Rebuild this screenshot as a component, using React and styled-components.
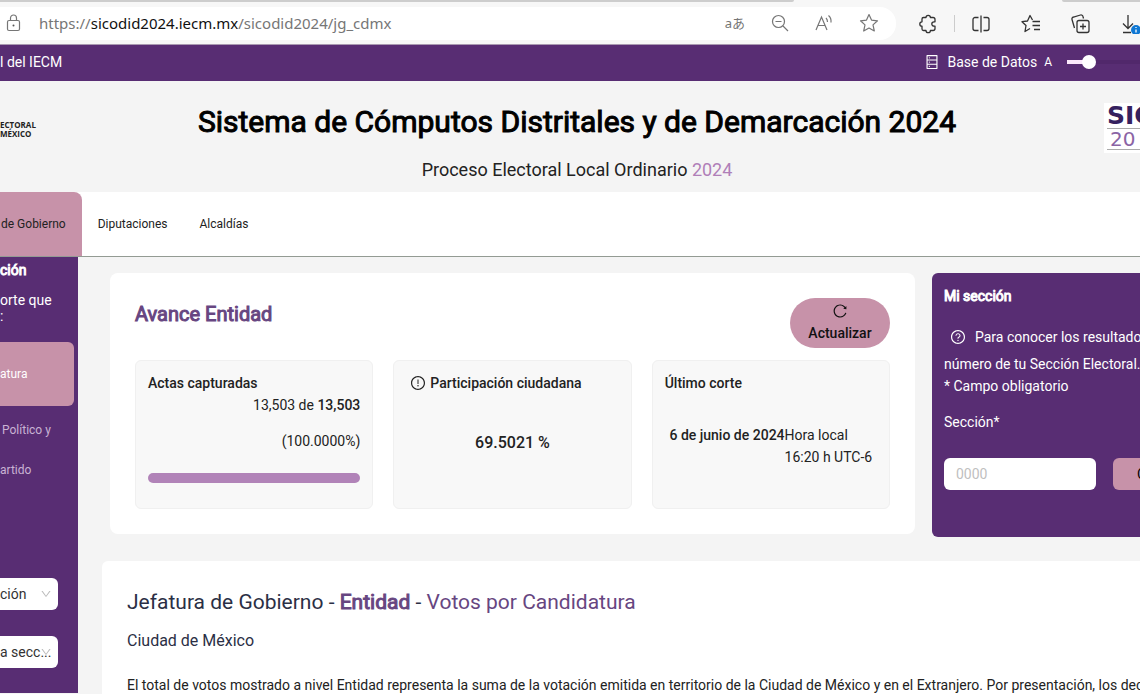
import React, { useState } from "react";
import styled, { createGlobalStyle, css } from "styled-components";
import {
	AiOutlineDatabase,
	AiOutlineDown,
	AiOutlineExclamationCircle,
	AiOutlineQuestionCircle,
	AiOutlineReload,
} from "react-icons/ai";

const purple = "#582d73";
const pink = "#c792a9";

function BrowserBar() {
	return (
		<Browser>
			<TabStrip>
				<StripPart $grow />
				<StripGap />
				<StripPart $right />
			</TabStrip>
			<BrowserRow>
				<AddressBar>
					<svg width="16" height="18" viewBox="0 0 16 18" fill="none" stroke="#767676" strokeWidth="1.2">
						<rect x="1.5" y="6.5" width="12" height="10" rx="1.5" />
						<path d="M4.5 6.5V4a3 3 0 0 1 6 0v2.5" />
						<circle cx="7.5" cy="11.5" r="1" fill="#555" stroke="none" />
					</svg>
					<Url>
						https://<b>sicodid2024.iecm.mx</b>/sicodid2024/jg_cdmx
					</Url>
					<AddressIcons>
						<Translate>aあ</Translate>
						<svg width="18" height="18" viewBox="0 0 18 18" fill="none" stroke="#767676" strokeWidth="1.2">
							<circle cx="7.5" cy="7.5" r="6" />
							<path d="M12 12l5 5M4.5 7.5h6" />
						</svg>
						<svg width="18" height="18" viewBox="0 0 18 18" fill="none" stroke="#767676" strokeWidth="1.2">
							<path d="M1 16L6.5 3 12 16M3 11.500h7M11 4q1.500 1.500 1.500 4M13.500 1.500q3 2.500 2.500 7" />
						</svg>
						<svg width="20" height="20" viewBox="0 0 20 20" fill="none" stroke="#767676" strokeWidth="1.2" strokeLinejoin="round">
							<path d="M10 1.500l2.500 5.600 6 .7-4.500 4.100 1.300 6.100L10 15l-5.300 3 1.300-6.100L1.500 7.800l6-.7z" />
						</svg>
					</AddressIcons>
				</AddressBar>
				<Tools>
					<svg width="20" height="20" viewBox="0 0 20 20" fill="none" stroke="#333" strokeWidth="1.3" strokeLinejoin="round">
						<path d="M5.500 3.500h2.500a2.200 2.200 0 0 1 4.400 0h2.600a2 2 0 0 1 2 2v2.300h-1a2.200 2.200 0 0 0 0 4.400h1v2.300a2 2 0 0 1-2 2h-2.600a2.200 2.200 0 0 1-4.400 0h-2.500a1.500 1.500 0 0 1-1.500-1.500v-2.800a2.200 2.200 0 0 1 0-4.400v-2.800a1.500 1.500 0 0 1 1.500-1.500z" />
					</svg>
					<Separator />
					<svg width="20" height="20" viewBox="0 0 20 20" fill="none" stroke="#333" strokeWidth="1.3">
						<path d="M7.500 3.500H4a2 2 0 0 0-2 2v9a2 2 0 0 0 2 2h3.500M12.500 3.500H16a2 2 0 0 1 2 2v9a2 2 0 0 1-2 2h-3.500M10 1.500v17" />
					</svg>
					<svg width="20" height="20" viewBox="0 0 20 20" fill="none" stroke="#333" strokeWidth="1.3" strokeLinejoin="round">
						<path d="M11.500 6L9 1.500 6.500 7l-5.500.7 4 3.800L4 17.500l5-3M11.500 7.500H19M11.500 11.500H19M13 15.500h6" />
					</svg>
					<svg width="20" height="20" viewBox="0 0 20 20" fill="none" stroke="#333" strokeWidth="1.3">
						<rect x="6" y="6.500" width="12" height="12" rx="2" />
						<path d="M3.500 14L1 5.500a2 2 0 0 1 1.500-2.500l7-2a2 2 0 0 1 2.500 1.500l.5 2M12 9.500v6M9 12.500h6" />
					</svg>
					<svg width="20" height="20" viewBox="0 0 20 20" fill="none" stroke="#333" strokeWidth="1.3">
						<path d="M7 1v13M2 9.500l5 5 5-5M2 18.500h8" />
						<circle cx="15" cy="16" r="5" fill="#0f78d4" stroke="none" />
						<path d="M15 15.500v3M15 13v1" stroke="#fff" />
					</svg>
				</Tools>
			</BrowserRow>
		</Browser>
	);
}

function Sidebar() {
	return (
		<Side>
			<SideTitle>ción</SideTitle>
			<SideText>
				orte que
				<br />:
			</SideText>
			<SideActive href="#candidatura">atura</SideActive>
			<SideLink href="#politico">Político y</SideLink>
			<SideLink href="#partido">artido</SideLink>
			<SideSelects>
				<SelectBox>
					<select aria-label="Demarcación">
						<option>ción</option>
					</select>
					<AiOutlineDown />
				</SelectBox>
				<SelectBox>
					<select aria-label="Sección">
						<option>a secc...</option>
					</select>
					<AiOutlineDown />
				</SelectBox>
			</SideSelects>
		</Side>
	);
}

function App() {
	const [size, setSize] = useState(25);
	const [seccion, setSeccion] = useState("");

	return (
		<Page>
			<GlobalStyle />
			<BrowserBar />
			<NavBar>
				<a href="#iecm">l del IECM</a>
				<NavRight>
					<a href="#datos">
						<AiOutlineDatabase size={16} /> Base de Datos
					</a>
					<label htmlFor="size">A</label>
					<Range
						id="size"
						type="range"
						value={size}
						onChange={(e) => setSize(e.target.value)}
					/>
				</NavRight>
			</NavBar>
			<Header>
				<IecmLogo>
					ECTORAL
					<br />
					MÉXICO
				</IecmLogo>
				<HeaderText>
					<h1>Sistema de Cómputos Distritales y de Demarcación 2024</h1>
					<p>
						Proceso Electoral Local Ordinario <span>2024</span>
					</p>
				</HeaderText>
				<SicodidLogo>
					<strong>SIC</strong>
					<span>20</span>
				</SicodidLogo>
			</Header>
			<Tabs>
				<Tab href="#jefatura" $active>
					de Gobierno
				</Tab>
				<Tab href="#diputaciones">Diputaciones</Tab>
				<Tab href="#alcaldias">Alcaldías</Tab>
			</Tabs>
			<Body>
				<Sidebar />
				<Main>
					<TopRow>
						<Progress>
							<ProgressHead>
								<h2>Avance Entidad</h2>
								<UpdateButton>
									<AiOutlineReload size={16} />
									Actualizar
								</UpdateButton>
							</ProgressHead>
							<Cards>
								<Card>
									<h3>Actas capturadas</h3>
									<Count>
										13,503 de <b>13,503</b>
									</Count>
									<Percent>(100.0000%)</Percent>
									<Bar>
										<div style={{ width: "100%" }} />
									</Bar>
								</Card>
								<Card>
									<h3>
										<AiOutlineExclamationCircle size={16} /> Participación ciudadana
									</h3>
									<Turnout>69.5021 %</Turnout>
								</Card>
								<Card>
									<h3>Último corte</h3>
									<Cutoff>
										<b>6 de junio de 2024</b>
										<span>
											Hora local
											<br />
											16:20 h UTC-6
										</span>
									</Cutoff>
								</Card>
							</Cards>
						</Progress>
						<Section>
							<h2>Mi sección</h2>
							<SectionHint>
								<AiOutlineQuestionCircle size={16} />
								Para conocer los resultados
							</SectionHint>
							<p>número de tu Sección Electoral.</p>
							<p>* Campo obligatorio</p>
							<label htmlFor="seccion">Sección*</label>
							<SectionForm>
								<input
									id="seccion"
									placeholder="0000"
									value={seccion}
									onChange={(e) => setSeccion(e.target.value)}
								/>
								<button>Consultar</button>
							</SectionForm>
						</Section>
					</TopRow>
					<Results>
						<h2>
							Jefatura de Gobierno - <b>Entidad</b> - <span>Votos por Candidatura</span>
						</h2>
						<h3>Ciudad de México</h3>
						<p>
							El total de votos mostrado a nivel Entidad representa la suma de la votación
							emitida en territorio de la Ciudad de México y en el Extranjero. Por
							presentación, los decimales
						</p>
					</Results>
				</Main>
			</Body>
		</Page>
	);
}

export default App;

const GlobalStyle = createGlobalStyle`
	* {
		box-sizing: border-box;
		margin: 0;
	}
	body {
		overflow: hidden;
		background: #f4f4f4;
		color: #222;
		font: 14px/22px Roboto, sans-serif;
	}
	a {
		color: inherit;
		text-decoration: none;
	}
	button, input, select {
		font: inherit;
	}
`;

/* regular outlines thickened, so widths stay those of the regular weight */
const thick = css`
	font-weight: 400;
	-webkit-text-stroke: 1px currentColor;
`;

const Page = styled.div`
	display: flex;
	flex-direction: column;
	height: 100vh;
	overflow: hidden;
`;

const Browser = styled.div`
	flex: none;
	height: 45px;
	background: #f7f7f7;
	border-bottom: 1px solid #a999b1;
`;

const TabStrip = styled.div`
	display: flex;
	height: 2px;
`;

const StripPart = styled.div`
	flex: ${({ $grow }) => ($grow ? "1" : "0 0 78px")};
	background: #cdcdcd;
	border-radius: ${({ $right }) => ($right ? "0 0 0 2px" : "0 0 2px 0")};
`;

const StripGap = styled.div`
	flex: 0 0 268px;
`;

const BrowserRow = styled.div`
	display: flex;
	align-items: center;
	padding-top: 5px;
`;

const AddressBar = styled.div`
	display: flex;
	align-items: center;
	flex: 1;
	height: 33px;
	padding: 0 17px 2px 6px;
	background: #fff;
	border-radius: 0 16px 16px 0;
`;

const Url = styled.span`
	margin-left: 17px;
	color: #767676;
	font: 15px/20px "Noto Sans", sans-serif;
	> b {
		color: #111;
		font-weight: 400;
	}
`;

const AddressIcons = styled.div`
	display: flex;
	align-items: center;
	gap: 26px;
	margin-left: auto;
`;

const Translate = styled.span`
	color: #767676;
	font: 13px/18px "Noto Sans", "Noto Sans CJK JP", sans-serif;
`;

const Tools = styled.div`
	display: flex;
	align-items: center;
	flex: none;
	width: 244px;
	padding-left: 22px;
	gap: 30px;
	> svg {
		flex: none;
	}
`;

const Separator = styled.div`
	flex: none;
	width: 1px;
	height: 17px;
	margin: 0 -14px;
	background: #ccc;
`;

const NavBar = styled.nav`
	display: flex;
	align-items: center;
	justify-content: space-between;
	flex: none;
	height: 36px;
	padding-bottom: 2px;
	background: ${purple};
	color: #fff;
`;

const NavRight = styled.div`
	display: flex;
	align-items: center;
	gap: 7px;
	> a {
		display: flex;
		align-items: center;
		gap: 7px;
	}
	> label {
		font-size: 12px;
	}
`;

const Range = styled.input`
	appearance: none;
	width: 73px;
	height: 14px;
	margin-left: 8px;
	background: linear-gradient(#fbe9fb, #fbe9fb) 0 5px / 20px 4px no-repeat,
		linear-gradient(#51286b, #51286b) 0 5px / 100% 4px no-repeat;
	&::-webkit-slider-thumb {
		appearance: none;
		width: 14px;
		height: 14px;
		border-radius: 50%;
		background: #fff;
	}
`;

const Header = styled.header`
	display: flex;
	align-items: center;
	flex: none;
	height: 111px;
`;

const IecmLogo = styled.div`
	flex: 0 0 50px;
	margin-top: -16px;
	font: 700 8px/9px "Open Sans", sans-serif;
`;

const HeaderText = styled.div`
	flex: 1;
	padding-top: 10px;
	text-align: center;
	> h1 {
		${thick}
		color: #000;
		font-size: 30px;
		line-height: 40px;
	}
	> p {
		margin-top: 16px;
		font-size: 18px;
		line-height: 24px;
	}
	span {
		color: #b07fb8;
	}
`;

const SicodidLogo = styled.div`
	flex: 0 0 36px;
	height: 50px;
	margin-top: -18px;
	padding: 2px 0 0 3px;
	overflow: hidden;
	background: #fff;
	color: #35215f;
	font: 20px/20px "DejaVu Sans", sans-serif;
	> strong {
		display: block;
		font-size: 25px;
		line-height: 22px;
	}
	> span {
		display: block;
		margin-top: 1px;
		padding-left: 3px;
		border-top: 1px solid #aaa;
		border-bottom: 1px solid #aaa;
		color: #8b64a5;
	}
`;

const Tabs = styled.nav`
	display: flex;
	flex: none;
	height: 65px;
	background: #fff;
	border-bottom: 1px solid #939b93;
	font-size: 12px;
`;

const Tab = styled.a`
	display: flex;
	align-items: center;
	padding: 0 16px;
	${({ $active }) =>
		$active &&
		css`
			padding-left: 1px;
			background: ${pink};
			border-radius: 0 8px 0 0;
		`}
`;

const Body = styled.div`
	display: flex;
	flex: 1;
	min-height: 0;
`;

const Side = styled.aside`
	display: flex;
	flex-direction: column;
	flex: 0 0 78px;
	margin-bottom: 1px;
	background: ${purple};
	color: #fff;
	overflow: hidden;
`;

const SideTitle = styled.h2`
	${thick}
	margin-top: 2px;
	font-size: 14px;
	line-height: 22px;
`;

const SideText = styled.p`
	margin-top: 11px;
	line-height: 16px;
`;

const SideActive = styled.a`
	display: flex;
	align-items: center;
	height: 64px;
	margin: 18px 4px 12px 0;
	background: ${pink};
	border-radius: 0 6px 6px 0;
	font-size: 12px;
`;

const SideLink = styled.a`
	padding-left: 2px;
	color: #c9b3d3;
	font-size: 12px;
	line-height: 24px;
	& + & {
		margin-top: 16px;
		padding-left: 0;
	}
`;

const SideSelects = styled.div`
	display: flex;
	flex-direction: column;
	gap: 26px;
	margin: auto 20px 25px 0;
`;

const SelectBox = styled.div`
	position: relative;
	> select {
		appearance: none;
		display: block;
		width: 100%;
		height: 32px;
		padding: 0;
		border: 0;
		border-radius: 0 6px 6px 0;
		background: #fff;
		color: #333;
	}
	> svg {
		position: absolute;
		top: 10px;
		right: 6px;
		color: #bbb;
		font-size: 12px;
	}
`;

const Main = styled.main`
	flex: 1;
	min-width: 0;
	padding: 16px 0 0 24px;
`;

const TopRow = styled.div`
	display: flex;
	align-items: flex-start;
	gap: 17px;
	padding-left: 8px;
`;

const Progress = styled.section`
	flex: 1;
	padding: 25px;
	background: #fff;
	border-radius: 8px;
`;

const ProgressHead = styled.div`
	display: flex;
	justify-content: space-between;
	> h2 {
		${thick}
		color: #674681;
		font-size: 20px;
		line-height: 32px;
	}
`;

const UpdateButton = styled.button`
	display: flex;
	flex-direction: column;
	align-items: center;
	gap: 3px;
	width: 100px;
	height: 50px;
	padding: 5px 0 0;
	border: 0;
	border-radius: 25px;
	background: ${pink};
	color: #111;
	font-weight: 500;
`;

const Cards = styled.div`
	display: grid;
	grid-template-columns: repeat(3, 1fr);
	gap: 20px;
	margin-top: 12px;
`;

const Card = styled.div`
	height: 149px;
	padding: 11px 12px;
	background: #f8f8f8;
	border: 1px solid #f0f0f0;
	border-radius: 6px;
	> h3 {
		display: flex;
		align-items: center;
		gap: 4px;
		font-size: 14px;
		font-weight: 500;
		line-height: 22px;
	}
	> h3 > svg {
		margin-left: 4px;
	}
	b {
		font-weight: 500;
	}
`;

const Count = styled.p`
	text-align: right;
`;

const Percent = styled.p`
	margin-top: 14px;
	text-align: right;
`;

const Bar = styled.div`
	margin-top: 21px;
	> div {
		height: 10px;
		border-radius: 5px;
		background: #b183b8;
	}
`;

const Turnout = styled.p`
	margin-top: 38px;
	font-size: 16px;
	font-weight: 500;
	text-align: center;
`;

const Cutoff = styled.div`
	display: flex;
	justify-content: center;
	margin-top: 30px;
	white-space: nowrap;
`;

const Section = styled.section`
	flex: 0 0 208px;
	height: 264px;
	padding: 12px 0 0 12px;
	overflow: hidden;
	white-space: nowrap;
	background: ${purple};
	border-radius: 6px 0 0 6px;
	color: #fff;
	> h2 {
		${thick}
		font-size: 14px;
		line-height: 22px;
	}
	> label {
		display: block;
		margin-top: 14px;
	}
`;

const SectionHint = styled.p`
	display: flex;
	align-items: center;
	gap: 9px;
	margin: 17px 0 3px;
	padding-left: 6px;
	line-height: 26px;
	> svg {
		flex: none;
	}
`;

const SectionForm = styled.div`
	display: flex;
	gap: 17px;
	margin-top: 25px;
	> input {
		flex: none;
		width: 152px;
		height: 32px;
		padding: 0 12px;
		border: 0;
		border-radius: 6px;
		background: #fff;
	}
	> input::placeholder {
		color: #bfbfbf;
	}
	> button {
		flex: none;
		height: 32px;
		padding: 0 24px;
		border: 0;
		border-radius: 6px;
		background: ${pink};
		color: #000;
	}
`;

const Results = styled.section`
	height: 200px;
	margin-top: 24px;
	padding: 25px;
	overflow: hidden;
	white-space: nowrap;
	background: #fff;
	border-radius: 6px 0 0 0;
	color: #2b2f45;
	> h2 {
		font-size: 21px;
		font-weight: 400;
		line-height: 32px;
	}
	b {
		${thick}
		color: #674681;
	}
	span {
		color: #674681;
	}
	> h3 {
		margin-top: 11px;
		font-size: 16px;
		font-weight: 400;
		line-height: 24px;
	}
	> p {
		margin-top: 21px;
		color: #222;
	}
`;
